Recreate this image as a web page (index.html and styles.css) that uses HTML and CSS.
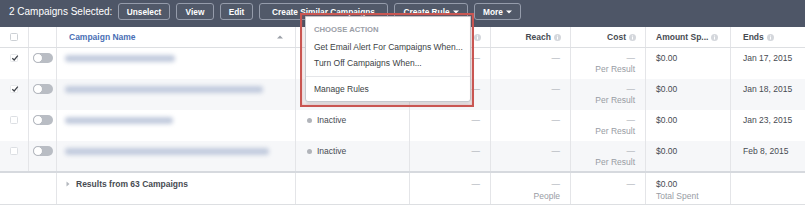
FILE: index.html
```html
<!DOCTYPE html>
<html>
<head>
<meta charset="utf-8">
<link rel="stylesheet" href="styles.css">
</head>
<body>
<div class="page">
  <div class="toolbar">
    <span class="title">2 Campaigns Selected:</span>
    <span class="btn w-unselect">Unselect</span>
    <span class="btn w-view">View</span>
    <span class="btn w-edit">Edit</span>
    <span class="btn w-similar">Create Similar Campaigns</span>
    <span class="btn w-rule">Create Rule <svg class="caret" width="6" height="4" viewBox="0 0 6 4"><path d="M0 0.5h6L3 3.5z" fill="#fff"/></svg></span>
    <span class="btn w-more">More <svg class="caret" width="6" height="4" viewBox="0 0 6 4"><path d="M0 0.5h6L3 3.5z" fill="#fff"/></svg></span>
  </div>

  <div class="row head">
    <div class="cell c-chk"><span class="box"></span></div>
    <div class="cell c-tog"></div>
    <div class="cell c-name"><span class="hname">Campaign Name</span><svg class="sort" width="6" height="4" viewBox="0 0 6 4"><path d="M0 3.5h6L3 0.5z" fill="#9ba0a8"/></svg></div>
    <div class="cell c-left"></div>
    <div class="cell c-right"><svg class="info" width="7" height="7" viewBox="0 0 7 7"><circle cx="3.5" cy="3.5" r="3.5" fill="#d4d7dc"/><rect x="3" y="3" width="1" height="2.5" fill="#fff"/><rect x="3" y="1.5" width="1" height="1" fill="#fff"/></svg></div>
    <div class="cell c-right">Reach <svg class="info" width="7" height="7" viewBox="0 0 7 7"><circle cx="3.5" cy="3.5" r="3.5" fill="#d4d7dc"/><rect x="3" y="3" width="1" height="2.5" fill="#fff"/><rect x="3" y="1.5" width="1" height="1" fill="#fff"/></svg></div>
    <div class="cell c-right">Cost <svg class="info" width="7" height="7" viewBox="0 0 7 7"><circle cx="3.5" cy="3.5" r="3.5" fill="#d4d7dc"/><rect x="3" y="3" width="1" height="2.5" fill="#fff"/><rect x="3" y="1.5" width="1" height="1" fill="#fff"/></svg></div>
    <div class="cell c-amt">Amount Sp... <svg class="info" width="7" height="7" viewBox="0 0 7 7"><circle cx="3.5" cy="3.5" r="3.5" fill="#d4d7dc"/><rect x="3" y="3" width="1" height="2.5" fill="#fff"/><rect x="3" y="1.5" width="1" height="1" fill="#fff"/></svg></div>
    <div class="cell c-ends">Ends <svg class="info" width="7" height="7" viewBox="0 0 7 7"><circle cx="3.5" cy="3.5" r="3.5" fill="#d4d7dc"/><rect x="3" y="3" width="1" height="2.5" fill="#fff"/><rect x="3" y="1.5" width="1" height="1" fill="#fff"/></svg></div>
  </div>

  <div class="row body">
    <div class="cell c-chk"><span class="box checked"><svg width="8" height="8" viewBox="0 0 8 8"><path d="M1.3 4.2L3.2 6L6.8 1.6" fill="none" stroke="#3f434a" stroke-width="1.2"/></svg></span></div>
    <div class="cell c-tog"><span class="toggle"><span class="knob"></span></span></div>
    <div class="cell c-name"><span class="blur" style="width:110px"></span></div>
    <div class="cell c-left"></div>
    <div class="cell c-right"><span class="dash">—</span></div>
    <div class="cell c-right"><span class="dash">—</span></div>
    <div class="cell c-right"><span class="dash">—</span><span class="sub">Per Result</span></div>
    <div class="cell c-amt">$0.00</div>
    <div class="cell c-ends">Jan 17, 2015</div>
  </div>

  <div class="row body alt">
    <div class="cell c-chk"><span class="box checked"><svg width="8" height="8" viewBox="0 0 8 8"><path d="M1.3 4.2L3.2 6L6.8 1.6" fill="none" stroke="#3f434a" stroke-width="1.2"/></svg></span></div>
    <div class="cell c-tog"><span class="toggle"><span class="knob"></span></span></div>
    <div class="cell c-name"><span class="blur" style="width:198px"></span></div>
    <div class="cell c-left"></div>
    <div class="cell c-right"><span class="dash">—</span></div>
    <div class="cell c-right"><span class="dash">—</span></div>
    <div class="cell c-right"><span class="dash">—</span><span class="sub">Per Result</span></div>
    <div class="cell c-amt">$0.00</div>
    <div class="cell c-ends">Jan 18, 2015</div>
  </div>

  <div class="row body">
    <div class="cell c-chk"><span class="box empty"></span></div>
    <div class="cell c-tog"><span class="toggle"><span class="knob"></span></span></div>
    <div class="cell c-name"><span class="blur" style="width:108px"></span></div>
    <div class="cell c-left"><span class="dot"></span>Inactive</div>
    <div class="cell c-right"><span class="dash">—</span></div>
    <div class="cell c-right"><span class="dash">—</span></div>
    <div class="cell c-right"><span class="dash">—</span><span class="sub">Per Result</span></div>
    <div class="cell c-amt">$0.00</div>
    <div class="cell c-ends">Jan 23, 2015</div>
  </div>

  <div class="row body alt last">
    <div class="cell c-chk"><span class="box empty"></span></div>
    <div class="cell c-tog"><span class="toggle"><span class="knob"></span></span></div>
    <div class="cell c-name"><span class="blur" style="width:204px"></span></div>
    <div class="cell c-left"><span class="dot"></span>Inactive</div>
    <div class="cell c-right"><span class="dash">—</span></div>
    <div class="cell c-right"><span class="dash">—</span></div>
    <div class="cell c-right"><span class="dash">—</span><span class="sub">Per Result</span></div>
    <div class="cell c-amt">$0.00</div>
    <div class="cell c-ends">Feb 8, 2015</div>
  </div>

  <div class="row foot">
    <div class="cell c-span"></div>
    <div class="cell c-name c-foot-name"><svg class="expand" width="4" height="6" viewBox="0 0 4 6"><path d="M0.5 0.5L3.5 3L0.5 5.5z" fill="#b4b8be"/></svg><span class="results">Results from 63 Campaigns</span></div>
    <div class="cell c-left"></div>
    <div class="cell c-right"><span class="dash">—</span></div>
    <div class="cell c-right"><span class="dash">—</span><span class="sub">People</span></div>
    <div class="cell c-right"><span class="dash">—</span></div>
    <div class="cell c-amt"><span>$0.00</span><span class="sub">Total Spent</span></div>
    <div class="cell c-ends"></div>
  </div>

  <div class="dropdown">
    <div class="dd-head">CHOOSE ACTION</div>
    <div class="dd-item">Get Email Alert For Campaigns When...</div>
    <div class="dd-item">Turn Off Campaigns When...</div>
    <div class="dd-sep"></div>
    <div class="dd-item">Manage Rules</div>
  </div>
  <div class="highlight"></div>
</div>
</body>
</html>
```

FILE: styles.css
```css
* { box-sizing: border-box; }
html, body { margin: 0; padding: 0; background: #fff; }
body { font-family: "Liberation Sans", Arial, sans-serif; font-size: 8.5px; color: #474b52; }

.page { position: relative; width: 805px; height: 207px; overflow: hidden; background: #fff; }

.toolbar {
  height: 27px;
  background: #4e5667;
  display: flex;
  align-items: flex-start;
  padding: 3px 0 0 9px;
  gap: 6px;
}
.title { color: #fff; font-size: 10px; line-height: 17px; width: 103px; white-space: nowrap; }
.btn {
  height: 17px;
  border: 1px solid #959cab;
  border-radius: 3px;
  color: #fff;
  font-weight: bold;
  font-size: 8.3px;
  display: flex;
  align-items: center;
  justify-content: center;
  gap: 3px;
  white-space: nowrap;
  background: rgba(255,255,255,0.02);
}
.w-unselect { width: 52px; }
.w-view { width: 38px; }
.w-edit { width: 33px; }
.w-similar { width: 129px; }
.w-rule { width: 74px; }
.w-more { width: 47px; }
.caret { display: block; }

.row {
  display: grid;
  grid-template-columns: 29px 28px 239px 114px 81px 80px 75px 85px 74px;
}
.cell { border-right: 1px solid #e4e5e8; white-space: nowrap; }
.cell:last-child { border-right: none; }

.head { height: 21px; border-bottom: 1px solid #dddfe2; font-weight: bold; }
.head .cell { display: flex; align-items: center; gap: 3px; }
.head .c-chk { justify-content: center; }
.head .c-name { justify-content: space-between; padding: 0 12px 0 12px; }
.hname { color: #4a6fb5; }
.sort { display: block; }
.info { display: block; }

.body { height: 31px; background: #fff; }
.body.alt { background: #f6f7f9; }
.body.last { height: 30px; }
.body .cell { padding-top: 5px; line-height: 11px; }

.c-chk { display: flex; justify-content: center; }
.body .c-chk { padding-top: 6px; }
.box { width: 8px; height: 8px; border: 1px solid #ccd0d5; border-radius: 1.5px; background: #fff; display: block; }
.box.checked { border-color: #e6e8eb; position: relative; }
.box.checked svg { position: absolute; left: -0.5px; top: -1px; }
.box.empty { border-color: #dcdfe3; }

.body .c-tog { padding: 5px 0 0 4px; }
.toggle { display: block; width: 20px; height: 10px; border-radius: 5px; background: #b9bdc4; position: relative; }
.knob { position: absolute; left: 0; top: 0; width: 10px; height: 10px; border-radius: 50%; background: #fff; border: 1px solid #b3b7be; }

.body .c-name { padding: 7px 0 0 8px; }
.blur { display: block; height: 7px; border-radius: 3px; background: #c2cbdd; filter: blur(2.2px); }

.c-left { padding-left: 11px; display: flex; align-items: flex-start; }
.dot { width: 5px; height: 5px; border-radius: 50%; background: #b1b4ba; margin: 3px 5px 0 0; }

.c-right { display: flex; flex-direction: column; align-items: flex-end; padding-right: 10px; }
.head .c-right { flex-direction: row; justify-content: flex-end; padding-right: 9px; }
.dash { color: #a4a8b0; }
.sub { color: #989ca4; }

.c-amt { padding-left: 10px; display: flex; flex-direction: column; }
.head .c-amt { flex-direction: row; }
.c-ends { padding-left: 12px; }

.foot { height: 34px; border-top: 2px solid #d6d9de; border-bottom: 1px solid #dddfe2; }
.foot .cell { padding-top: 5px; line-height: 12px; }
.c-span { grid-column: span 2; }
.c-foot-name { display: flex; align-items: flex-start; padding-left: 9px; }
.foot .c-foot-name { padding-left: 9px; }
.expand { display: block; margin: 3px 6px 0 0; }
.results { font-weight: bold; color: #474b52; }

.dropdown {
  position: absolute;
  left: 305px;
  top: 16px;
  width: 166px;
  height: 86px;
  background: #fff;
  border: 1px solid #c6c9ce;
  border-radius: 0 0 3px 3px;
  box-shadow: 0 2px 4px rgba(0,0,0,0.15);
  padding-top: 7px;
}
.dd-head { font-weight: bold; font-size: 7.7px; color: #9a9ea6; line-height: 12px; padding-left: 8px; margin-bottom: 3px; }
.dd-item { line-height: 16px; padding-left: 8px; color: #3c3f45; white-space: nowrap; }
.dd-sep { height: 1px; background: #e5e6e9; margin: 5px 0 4px; }

.highlight {
  position: absolute;
  left: 300px;
  top: 13px;
  width: 174px;
  height: 94px;
  border: 2px solid #c95652;
  box-shadow: inset 0 0 3px rgba(201,86,82,0.45);
  pointer-events: none;
}
```
